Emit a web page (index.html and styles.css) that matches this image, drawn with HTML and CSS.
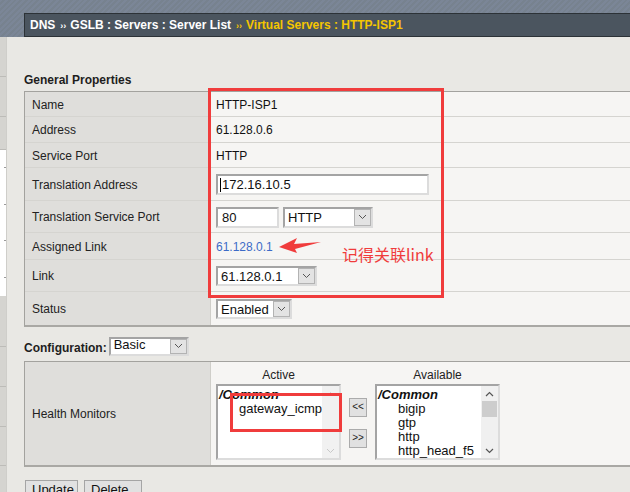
FILE: index.html
```html
<!DOCTYPE html>
<html>
<head>
<meta charset="utf-8">
<link rel="stylesheet" href="styles.css">
</head>
<body>
<div class="topband">
  <div class="crumb">DNS<span class="sep">››</span>GSLB : Servers : Server List<span class="sep y">››</span><span class="y">Virtual Servers : HTTP-ISP1</span></div>
</div>
<div class="page">
  <div class="strip">
    <div class="s1"></div><div class="s2"></div><div class="s3"></div>
    <div class="sw"><i></i><i></i><i></i><i></i></div>
    <div class="s4"></div><div class="s5"></div><div class="s6"></div><div class="s7"></div><div class="s8"></div>
  </div>
  <div class="main">
    <div class="heading">General Properties</div>
    <div class="props">
      <div class="row h25"><div class="lbl">Name</div><div class="val">HTTP-ISP1</div></div>
      <div class="row h26"><div class="lbl">Address</div><div class="val">61.128.0.6</div></div>
      <div class="row h25"><div class="lbl">Service Port</div><div class="val">HTTP</div></div>
      <div class="row h33"><div class="lbl">Translation Address</div><div class="val"><div class="input w213"><span class="caret"></span>172.16.10.5</div></div></div>
      <div class="row h32"><div class="lbl">Translation Service Port</div><div class="val"><div class="input w63">80</div><div class="select w90"><span>HTTP</span><b class="arr"><svg width="9" height="6" viewBox="0 0 9 6"><path d="M1 1l3.5 3.5L8 1" fill="none" stroke="#555" stroke-width="1"/></svg></b></div></div></div>
      <div class="row h27"><div class="lbl">Assigned Link</div><div class="val link">61.128.0.1</div></div>
      <div class="row h32"><div class="lbl">Link</div><div class="val"><div class="select w101"><span>61.128.0.1</span><b class="arr"><svg width="9" height="6" viewBox="0 0 9 6"><path d="M1 1l3.5 3.5L8 1" fill="none" stroke="#555" stroke-width="1"/></svg></b></div></div></div>
      <div class="row h33 last"><div class="lbl">Status</div><div class="val"><div class="select w76"><span>Enabled</span><b class="arr"><svg width="9" height="6" viewBox="0 0 9 6"><path d="M1 1l3.5 3.5L8 1" fill="none" stroke="#555" stroke-width="1"/></svg></b></div></div></div>
    </div>
    <div class="config"><span class="cfglbl">Configuration:</span><div class="select w80 basic"><span>Basic</span><b class="arr"><svg width="9" height="6" viewBox="0 0 9 6"><path d="M1 1l3.5 3.5L8 1" fill="none" stroke="#555" stroke-width="1"/></svg></b></div></div>
    <div class="hm">
      <div class="lbl hmlbl">Health Monitors</div>
      <div class="hmval">
        <div class="col">
          <div class="colhead">Active</div>
          <div class="listbox">
            <div class="items">
              <div class="grp">/Common</div>
              <div class="it">gateway_icmp</div>
            </div>
            <div class="sb dis">
              <svg width="9" height="6" viewBox="0 0 9 6"><path d="M1 5l3.5-3.5L8 5" fill="none" stroke="#c8c8c8" stroke-width="1"/></svg>
              <svg width="9" height="6" viewBox="0 0 9 6"><path d="M1 1l3.5 3.5L8 1" fill="none" stroke="#c8c8c8" stroke-width="1"/></svg>
            </div>
          </div>
        </div>
        <div class="movebtns">
          <div class="mv">&lt;&lt;</div>
          <div class="mv">&gt;&gt;</div>
        </div>
        <div class="col">
          <div class="colhead">Available</div>
          <div class="listbox">
            <div class="items">
              <div class="grp">/Common</div>
              <div class="it">bigip</div>
              <div class="it">gtp</div>
              <div class="it">http</div>
              <div class="it">http_head_f5</div>
            </div>
            <div class="sb">
              <svg width="9" height="6" viewBox="0 0 9 6"><path d="M1 5l3.5-3.5L8 5" fill="none" stroke="#555" stroke-width="1.2"/></svg>
              <div class="thumb"></div>
              <div class="sbfill"></div>
              <svg width="9" height="6" viewBox="0 0 9 6"><path d="M1 1l3.5 3.5L8 1" fill="none" stroke="#555" stroke-width="1.2"/></svg>
            </div>
          </div>
        </div>
      </div>
    </div>
    <div class="btns"><div class="btn upd">Update</div><div class="btn del">Delete</div></div>
  </div>
</div>

<div class="anno box1"></div>
<div class="anno box2"></div>
<svg class="anno arrow" width="50" height="24" viewBox="0 0 50 24"><polygon points="1,11 19,2 16,8 43,6 17,13 19,17" fill="#f03c3c"/></svg>
<div class="anno note">记得关联link</div>
</body>
</html>
```

FILE: styles.css
```css
html, body {
  margin: 0;
  padding: 0;
  width: 630px;
  height: 492px;
  overflow: hidden;
  background: #e9e8e4;
  font-family: "Liberation Sans", Arial, sans-serif;
  font-size: 12px;
  color: #1e1e1e;
}

.topband {
  height: 37px;
  background: repeating-linear-gradient(135deg, #7b8697 0 2px, #77828f 2px 4px);
  display: flex;
  align-items: flex-end;
  padding-left: 24px;
  box-sizing: border-box;
}
.crumb {
  height: 24px;
  width: 640px;
  box-sizing: border-box;
  background: #4b555f;
  border: 1px solid #2c3237;
  border-right: none;
  color: #fff;
  font-weight: bold;
  font-size: 12px;
  line-height: 22px;
  padding-left: 5px;
  white-space: nowrap;
}
.crumb .sep { font-size: 9px; margin: 0 4px 0 5px; }
.crumb .y { color: #f5c500; }

.page { display: flex; }

.strip {
  width: 6px;
  border-right: 1px solid #cfceca;
  display: flex;
  flex-direction: column;
  background: #d5d4d0;
  height: 455px;
}
.strip div { border-bottom: 1px solid #bdbcb8; }
.s1 { height: 39px; }
.s2 { height: 39px; }
.s3 { height: 32px; }
.strip .sw {
  height: 147px;
  background: #fff;
  border: none;
  display: flex;
  flex-direction: column;
  justify-content: space-around;
}
.sw i { display: block; width: 2px; height: 1px; background: #9a9a9a; margin-left: 4px; }
.s4 { height: 50px; }
.s5 { height: 40px; }
.s6 { height: 39px; }
.s7 { height: 38px; }
.s8 { height: 26px; border: none !important; }

.main {
  padding-left: 17px;
  padding-top: 36px;
  width: 640px;
}
.heading {
  font-weight: bold;
  line-height: 14px;
  margin-bottom: 4px;
}

.props {
  border-top: 1px solid #a3a29e;
  border-left: 1px solid #a3a29e;
  border-bottom: 2px solid #a9a8a4;
  width: 620px;
}
.row {
  display: flex;
  box-sizing: border-box;
  border-bottom: 1px solid #d5d4d0;
}
.row.last { border-bottom: none; }
.h25 { height: 25px; }
.h26 { height: 26px; }
.h27 { height: 27px; }
.h32 { height: 32px; }
.h33 { height: 33px; }
.lbl {
  width: 186px;
  flex: none;
  background: #dfdedb;
  border-right: 1px solid #cfcec9;
  padding-left: 7px;
  padding-top: 1px;
  box-sizing: border-box;
  display: flex;
  align-items: center;
  color: #222;
}
.val {
  flex: 1;
  background: #f6f5f3;
  padding-left: 5px;
  padding-top: 1px;
  display: flex;
  align-items: center;
  gap: 4px;
  color: #111;
}
.val.link { color: #3d6bc7; }

.input {
  height: 21px;
  box-sizing: border-box;
  background: #fff;
  border: 2px solid #dcdcdc;
  border-top-color: #a4a4a4;
  border-left-color: #a4a4a4;
  display: flex;
  align-items: center;
  padding-left: 2px;
  font-size: 13px;
  color: #111;
}
.caret { width: 1px; height: 14px; background: #000; margin-right: 1px; }
.w213 { width: 213px; }
.w63 { width: 63px; padding-left: 4px; }

.select {
  height: 21px;
  box-sizing: border-box;
  background: #fff;
  border: 2px solid #dcdcdc;
  border-top-color: #a4a4a4;
  border-left-color: #a4a4a4;
  display: flex;
  align-items: center;
  justify-content: space-between;
  font-size: 13px;
  color: #111;
}
.select span { padding-left: 3px; }
.select .arr {
  width: 17px;
  height: 17px;
  box-sizing: border-box;
  background: #e3e3e3;
  border: 1px solid #b3b3b3;
  display: flex;
  align-items: center;
  justify-content: center;
}
.w90 { width: 90px; }
.w101 { width: 101px; height: 20px; }
.w101 .arr { height: 16px; }
.w76 { width: 76px; height: 20px; }
.w76 .arr { height: 16px; }
.w80 { width: 80px; height: 19px; }
.w80 .arr { height: 15px; }

.config {
  display: flex;
  align-items: center;
  margin-top: 9px;
  height: 20px;
  margin-bottom: 5px;
}
.cfglbl { font-weight: bold; margin-right: 2px; margin-top: 4px; }
.basic span { font-size: 13px; margin-top: -3px; }

.hm {
  display: flex;
  border-top: 1px solid #a3a29e;
  border-left: 1px solid #a3a29e;
  border-bottom: 2px solid #a9a8a4;
  height: 103px;
  width: 620px;
}
.hmlbl { height: 100%; padding-top: 0; }
.hmval {
  flex: 1;
  background: #f6f5f3;
  padding-left: 5px;
  display: flex;
  gap: 8px;
}
.col { width: 125px; }
.colhead {
  text-align: center;
  line-height: 14px;
  margin-top: 6px;
  margin-bottom: 2px;
  color: #222;
}
.listbox {
  height: 76px;
  box-sizing: border-box;
  background: #fff;
  border: 2px solid #dcdcdc;
  border-top-color: #a4a4a4;
  border-left-color: #a4a4a4;
  display: flex;
  overflow: hidden;
}
.items { flex: 1; padding-top: 2px; padding-left: 1px; line-height: 14px; color: #111; }
.grp { font-weight: bold; font-style: italic; font-size: 13px; }
.it { padding-left: 20px; font-size: 13px; }
.sb {
  width: 17px;
  flex: none;
  background: #f0f0f0;
  display: flex;
  flex-direction: column;
  align-items: center;
  padding: 5px 0 4px;
  box-sizing: border-box;
}
.sb.dis { justify-content: space-between; background: #f1f1f1; }
.thumb { width: 15px; height: 16px; background: #cdcdcd; margin-top: 4px; }
.sbfill { flex: 1; }

.movebtns { display: flex; flex-direction: column; gap: 12px; padding-top: 36px; }
.mv {
  width: 18px;
  height: 19px;
  box-sizing: border-box;
  background: #e1e1e1;
  border: 1px solid #ababab;
  font-size: 10px;
  line-height: 16px;
  text-align: center;
  color: #222;
}

.btns { display: flex; gap: 6px; margin-top: 13px; padding-left: 1px; }
.btn {
  height: 22px;
  box-sizing: border-box;
  background: #e1e1e1;
  border: 1px solid #a5a5a5;
  padding-left: 6px;
  font-size: 13px;
  line-height: 18px;
  color: #111;
}
.upd { width: 53px; }
.del { width: 58px; }

.anno { position: absolute; }
.box1 {
  left: 208px; top: 88px; width: 236px; height: 210px;
  box-sizing: border-box;
  border: 3px solid #f03c3c;
}
.box2 {
  left: 230px; top: 393px; width: 112px; height: 39px;
  box-sizing: border-box;
  border: 3px solid #f03c3c;
}
.arrow { left: 278px; top: 236px; }
.note {
  left: 342px; top: 244px;
  font-family: "Noto Sans CJK SC", "Liberation Sans", sans-serif;
  font-size: 16px;
  line-height: 20px;
  color: #f03c3c;
}
```
